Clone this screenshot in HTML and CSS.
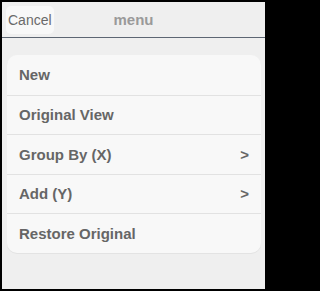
FILE: index.html
```html
<!DOCTYPE html>
<html>
<head>
<meta charset="utf-8">
<link rel="stylesheet" href="styles.css">
</head>
<body>
<div class="frame">
  <header class="bar">
    <div class="bar-left"><button class="cancel">Cancel</button></div>
    <div class="title">menu</div>
    <div class="bar-right"></div>
  </header>
  <ul class="menu">
    <li class="row"><span>New</span></li>
    <li class="row"><span>Original View</span></li>
    <li class="row"><span>Group By (X)</span><span class="arrow">&gt;</span></li>
    <li class="row"><span>Add (Y)</span><span class="arrow">&gt;</span></li>
    <li class="row"><span>Restore Original</span></li>
  </ul>
</div>
</body>
</html>
```
FILE: styles.css
```css
html, body {
  margin: 0;
  padding: 0;
  background: #000;
}
.frame {
  box-sizing: border-box;
  width: 267px;
  height: 291px;
  border: 2px solid #000;
  background: #efefef;
  font-family: "Liberation Sans", Arial, sans-serif;
  display: flex;
  flex-direction: column;
}
.bar {
  height: 35px;
  border-bottom: 1px solid #5d6673;
  display: grid;
  grid-template-columns: 1fr auto 1fr;
  align-items: center;
  padding: 0 4px;
  background: #efefef;
}
.bar-left {
  display: flex;
}
.cancel {
  width: 48px;
  height: 28px;
  border: none;
  border-radius: 5px;
  background: #f8f8f8;
  color: #6a6a6a;
  font-family: "Liberation Sans", Arial, sans-serif;
  font-size: 14px;
  padding: 0;
  text-align: left;
  padding-left: 2px;
}
.title {
  color: #9a9a9a;
  font-weight: bold;
  font-size: 15px;
}
.menu {
  list-style: none;
  margin: 17px 4px 0 5px;
  padding: 0;
  background: #f8f8f8;
  border-radius: 10px;
  box-shadow: 0 1px 0 #e3e3e3;
}
.row {
  box-sizing: border-box;
  height: 39.5px;
  display: flex;
  align-items: center;
  justify-content: space-between;
  padding: 0 12px;
  color: #666;
  font-weight: bold;
  font-size: 15px;
}
.row + .row {
  border-top: 1px solid #e2e2e2;
}
.arrow {
  color: #666;
}
```
